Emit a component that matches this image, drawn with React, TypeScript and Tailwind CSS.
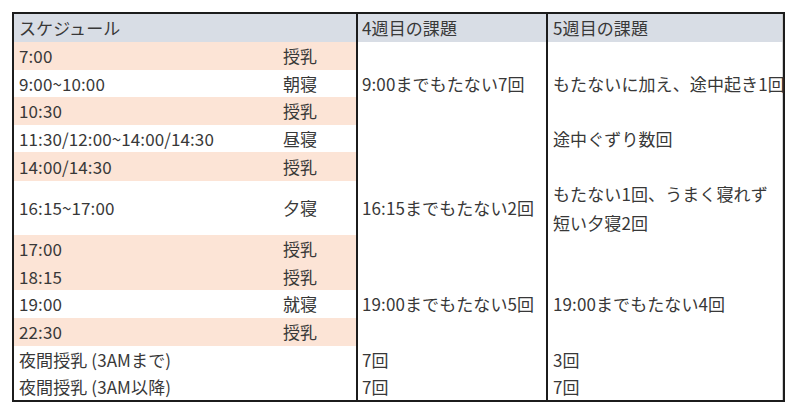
import React from "react";

type Row = {
  h: string;
  time: string;
  kind?: string;
  peach?: boolean;
  c2?: string;
  c3?: React.ReactNode;
};

const rows: Row[] = [
  { h: "h-[28px]", time: "7:00", kind: "授乳", peach: true },
  { h: "h-[27px]", time: "9:00~10:00", kind: "朝寝", c2: "9:00までもたない7回", c3: "もたないに加え、途中起き1回" },
  { h: "h-[28px]", time: "10:30", kind: "授乳", peach: true },
  { h: "h-[27px]", time: "11:30/12:00~14:00/14:30", kind: "昼寝", c3: "途中ぐずり数回" },
  { h: "h-[29px]", time: "14:00/14:30", kind: "授乳", peach: true },
  {
    h: "h-[54px]",
    time: "16:15~17:00",
    kind: "夕寝",
    c2: "16:15までもたない2回",
    c3: (
      <span className="leading-[29px]">
        もたない1回、うまく寝れず
        <br />
        短い夕寝2回
      </span>
    ),
  },
  { h: "h-[28px]", time: "17:00", kind: "授乳", peach: true },
  { h: "h-[27px]", time: "18:15", kind: "授乳", peach: true },
  { h: "h-[28px]", time: "19:00", kind: "就寝", c2: "19:00までもたない5回", c3: "19:00までもたない4回" },
  { h: "h-[28px]", time: "22:30", kind: "授乳", peach: true },
  { h: "h-[27px]", time: "夜間授乳 (3AMまで)", c2: "7回", c3: "3回" },
  { h: "h-[27px]", time: "夜間授乳 (3AM以降)", c2: "7回", c3: "7回" },
];

export default function App() {
  return (
    <div
      className="w-[800px] h-[416px] bg-white text-[#383838] text-[17px] tracking-[0.1px]"
      style={{ fontFamily: '"Noto Sans CJK JP", "Noto Sans", sans-serif' }}
    >
      <div className="pl-[12px] pt-[12px]">
        <div className="w-[773px] border-2 border-[#1c1c1c] flex flex-col">
          <div className="flex h-[28px] bg-[#d8dde5]">
            <div className="w-[342px] pl-[5px] flex items-center">スケジュール</div>
            <div className="w-[190px] border-l-2 border-[#1c1c1c] pl-[4px] flex items-center">4週目の課題</div>
            <div className="w-[237px] border-l-2 border-[#1c1c1c] border-r border-r-[#c8c8c8] pl-[5px] flex items-center">5週目の課題</div>
          </div>
          {rows.map((r, i) => (
            <div key={i} className={`flex ${r.h}`}>
              <div className={`w-[342px] pl-[5px] flex items-center ${r.peach ? "bg-[#fce4d6]" : "bg-white"}`}>
                <span className="w-[264px] whitespace-nowrap">{r.time}</span>
                {r.kind && <span>{r.kind}</span>}
              </div>
              <div className="w-[190px] border-l-2 border-[#1c1c1c] pl-[4px] flex items-center whitespace-nowrap">
                {r.c2}
              </div>
              <div className="w-[237px] border-l-2 border-[#1c1c1c] border-r border-r-[#d0d0d0] pl-[5px] flex items-center whitespace-nowrap">
                {r.c3}
              </div>
            </div>
          ))}
        </div>
      </div>
    </div>
  );
}
